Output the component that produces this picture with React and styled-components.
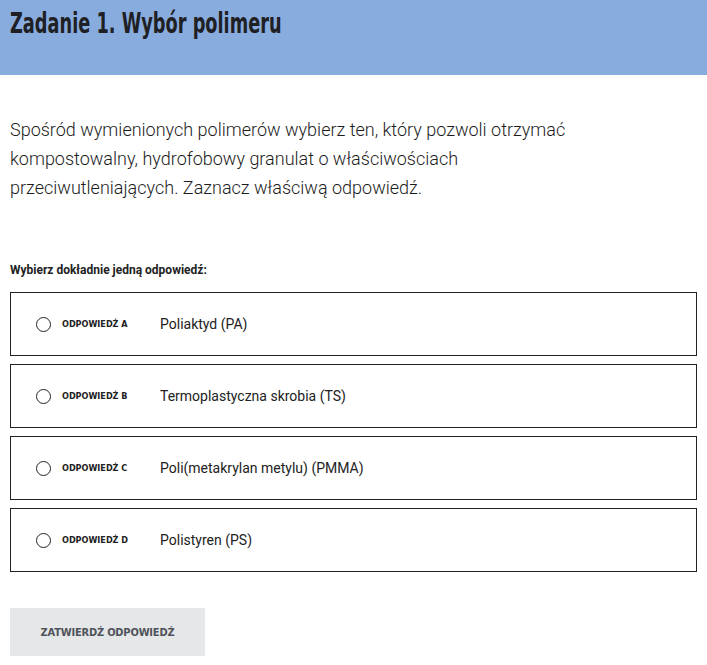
import React from 'react';
import styled, { createGlobalStyle } from 'styled-components';

const options = [
    { key: 'A', text: 'Poliaktyd (PA)' },
    { key: 'B', text: 'Termoplastyczna skrobia (TS)' },
    { key: 'C', text: 'Poli(metakrylan metylu) (PMMA)' },
    { key: 'D', text: 'Polistyren (PS)' },
];

export default function App() {
    return (
        <Page>
            <GlobalStyle />
            <Header>
                <Title>Zadanie 1. Wybór polimeru</Title>
            </Header>
            <Content>
                <Question>
                    Spośród wymienionych polimerów wybierz ten, który pozwoli otrzymać
                    kompostowalny, hydrofobowy granulat o właściwościach
                    przeciwutleniających. Zaznacz właściwą odpowiedź.
                </Question>
                <Hint>Wybierz dokładnie jedną odpowiedź:</Hint>
                <Options>
                    {options.map(o => (
                        <Option key={o.key}>
                            <Radio type="radio" name="answer" />
                            <Label>ODPOWIEDŹ {o.key}</Label>
                            <Answer>{o.text}</Answer>
                        </Option>
                    ))}
                </Options>
                <Submit>ZATWIERDŹ ODPOWIEDŹ</Submit>
            </Content>
        </Page>
    );
}

const GlobalStyle = createGlobalStyle`
    body {
        margin: 0;
        background: #fff;
        font-family: Roboto, "Liberation Sans", sans-serif;
        color: #222;
    }
`;

const Page = styled.div`
    width: 707px;
`;

const Header = styled.div`
    background: #87acdd;
    height: 75px;
    padding: 5px 10px 0;
    box-sizing: border-box;
`;

// the original heading face is a tall condensed grotesque; squeeze DejaVu to match
const Title = styled.h1`
    display: inline-block;
    margin: 0;
    font-family: "DejaVu Sans Condensed", "DejaVu Sans", sans-serif;
    font-weight: 700;
    font-size: 29px;
    line-height: 36px;
    color: #1f2024;
    transform: scaleX(0.68);
    transform-origin: left center;
    white-space: nowrap;
`;

const Content = styled.div`
    padding: 0 10px;
`;

const Question = styled.p`
    margin: 40px 0 0;
    max-width: 600px;
    font-size: 18px;
    font-weight: 300;
    line-height: 29px;
    color: #1c1c1c;
`;

const Hint = styled.div`
    margin-top: 60px;
    font-size: 12px;
    font-weight: 700;
    line-height: 16px;
`;

const Options = styled.div`
    margin-top: 14px;
    display: flex;
    flex-direction: column;
    gap: 8px;
`;

const Option = styled.label`
    display: flex;
    align-items: center;
    height: 64px;
    box-sizing: border-box;
    border: 1px solid #222;
    padding-left: 25px;
    cursor: pointer;
`;

const Radio = styled.input`
    appearance: none;
    margin: 0;
    width: 15px;
    height: 15px;
    border: 1px solid #222;
    border-radius: 50%;
    box-sizing: border-box;
`;

const Label = styled.span`
    margin-left: 11px;
    width: 98px;
    font-family: "DejaVu Sans Condensed", "DejaVu Sans", sans-serif;
    font-size: 9px;
    font-weight: 700;
`;

const Answer = styled.span`
    font-size: 14px;
    color: #222;
`;

const Submit = styled.button`
    display: block;
    margin-top: 36px;
    width: 195px;
    height: 48px;
    border: none;
    background: #e6e7e9;
    color: #4f535a;
    font-family: "DejaVu Sans Condensed", "DejaVu Sans", sans-serif;
    font-weight: 700;
    font-size: 11px;
    letter-spacing: -0.2px;
`;
